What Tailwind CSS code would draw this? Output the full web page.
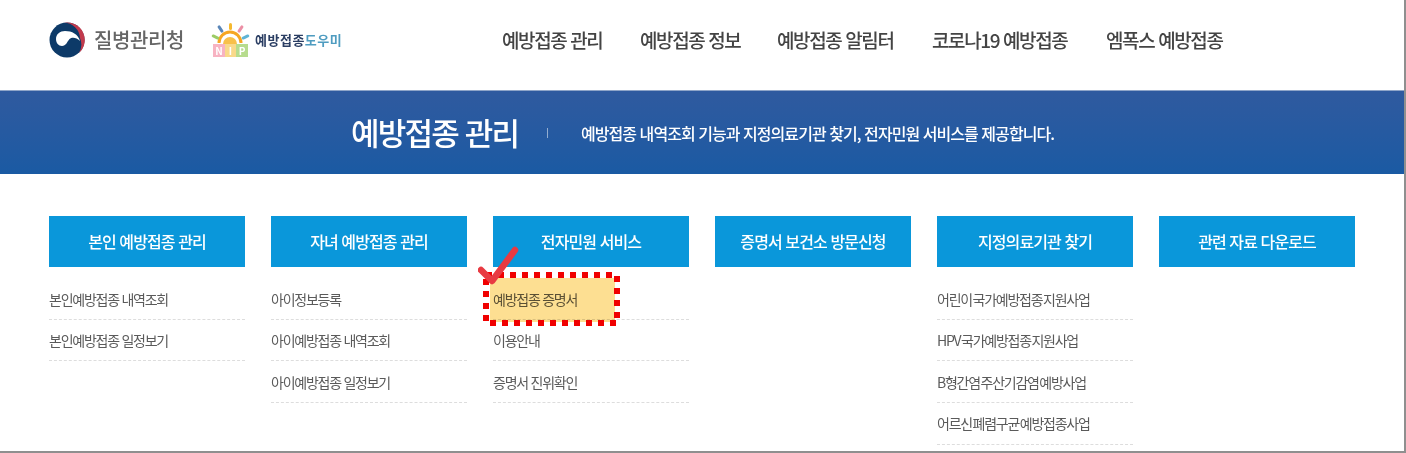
<!DOCTYPE html>
<html lang="ko">
<head>
  <meta charset="UTF-8" />
  <meta name="viewport" content="width=device-width, initial-scale=1.0"/>
  <title>예방접종 관리</title>
  <script src="https://cdn.jsdelivr.net/npm/@tailwindcss/browser@4"></script>
</head>
<body class="bg-white font-['Noto_Sans_CJK_KR','Noto_Sans',sans-serif]">
  <div class="relative w-[1406px] h-[453px] overflow-hidden bg-white border-r-2 border-b-2 border-[#8f8f8f]">

    <!-- Header -->
    <header class="h-[90px] flex items-center pl-[49px] pb-[10px] blur-[0.4px]">
      <div class="w-[135px] flex items-center gap-[9px]">
        <svg width="36" height="36" viewBox="0 0 36 36">
          <circle cx="18" cy="18" r="17.500" fill="#0d3a68"/>
          <path d="M15 0.800 A17.500 17.500 0 0 1 30 31 A17 17 0 0 0 31 16 A16 16 0 0 0 15 0.800Z" fill="#c23a4c"/>
          <path d="M7 17 C7 12 11 9 16 9 C23 9 29 12 31 19 C27 15 23 15 20.500 17 C18 20 17 24 13 24 C9.500 24 7 21 7 17Z" fill="#fff"/>
        </svg>
        <span class="text-[20px] font-medium tracking-[-0.4px] text-[#666] whitespace-nowrap">질병관리청</span>
      </div>
      <div class="ml-[27px] w-[133px] flex items-center gap-[4px]">
        <svg width="40" height="36" viewBox="0 0 40 36">
          <path d="M8 21 A11 11 0 0 1 30 21" fill="none" stroke="#f6a623" stroke-width="3"/>
          <path d="M12 22 A7 7 0 0 1 26 22 Z" fill="#f8c04a"/>
          <rect x="18" y="1" width="3" height="7" rx="1.500" fill="#f5b92f"/>
          <rect x="8" y="3" width="3" height="8" rx="1.500" fill="#5a86b8" transform="rotate(-35 9.500 7)"/>
          <rect x="28" y="3" width="3" height="8" rx="1.500" fill="#ec8fa5" transform="rotate(35 29.500 7)"/>
          <rect x="3" y="11" width="3" height="8" rx="1.500" fill="#9ccc65" transform="rotate(-65 4.500 15)"/>
          <rect x="33" y="11" width="3" height="8" rx="1.500" fill="#5fb4d6" transform="rotate(65 34.500 15)"/>
          <rect x="2" y="22" width="12" height="13" fill="#f7b3c2"/>
          <rect x="14" y="22" width="11" height="13" fill="#f9d98a"/>
          <rect x="25" y="22" width="12" height="13" fill="#b7dc8e"/>
          <text x="8" y="33" font-size="10" font-weight="700" fill="#fff" text-anchor="middle">N</text>
          <text x="19.500" y="33" font-size="10" font-weight="700" fill="#fff" text-anchor="middle">I</text>
          <text x="31" y="33" font-size="10" font-weight="700" fill="#fff" text-anchor="middle">P</text>
        </svg>
        <span class="text-[13px] font-bold tracking-[0.5px] text-[#2b3e63] whitespace-nowrap">예방접종<span class="text-[#4f9cc0]">도우미</span></span>
      </div>
      <nav class="ml-[158px] flex text-[19px] font-medium tracking-[-1.4px] text-[#444] whitespace-nowrap">
        <a class="w-[138px]">예방접종 관리</a>
        <a class="w-[137px]">예방접종 정보</a>
        <a class="w-[155px]">예방접종 알림터</a>
        <a class="w-[174px]">코로나19 예방접종</a>
        <a>엠폭스 예방접종</a>
      </nav>
    </header>

    <!-- Banner -->
    <section class="h-[84px] border-t border-[#8fa5c8] bg-gradient-to-b from-[#2f5a9f] to-[#1a5aa3] flex items-center pl-[351px] text-white whitespace-nowrap blur-[0.4px]">
      <h2 class="w-[196px] text-[31px] font-medium tracking-[-1.8px]">예방접종 관리</h2>
      <span class="w-px h-[10px] bg-white/50"></span>
      <p class="ml-[33px] text-[16px] font-medium tracking-[-0.95px]">예방접종 내역조회 기능과 지정의료기관 찾기, 전자민원 서비스를 제공합니다.</p>
    </section>

    <!-- Menu columns -->
    <main class="pt-[42px] pl-[49px] grid grid-cols-[repeat(6,196px)] gap-x-[26px] text-[14px] tracking-[-1.25px] text-[#5a5a5a] blur-[0.4px]">
      <div>
        <h3 class="h-[51px] pb-[2px] flex items-center justify-center bg-[#0a97da] text-white text-[16px] font-medium tracking-[-0.9px]">본인 예방접종 관리</h3>
        <ul class="pt-[11px]">
          <li class="h-[42px] pt-[11px] border-b border-dashed border-[#ddd]">본인예방접종 내역조회</li>
          <li class="h-[41px] pt-[10px] border-b border-dashed border-[#ddd]">본인예방접종 일정보기</li>
        </ul>
      </div>
      <div>
        <h3 class="h-[51px] pb-[2px] flex items-center justify-center bg-[#0a97da] text-white text-[16px] font-medium tracking-[-0.9px]">자녀 예방접종 관리</h3>
        <ul class="pt-[11px]">
          <li class="h-[42px] pt-[11px] border-b border-dashed border-[#ddd]">아이정보등록</li>
          <li class="h-[41px] pt-[10px] border-b border-dashed border-[#ddd]">아이예방접종 내역조회</li>
          <li class="h-[42px] pt-[11px] border-b border-dashed border-[#ddd]">아이예방접종 일정보기</li>
        </ul>
      </div>
      <div>
        <h3 class="h-[51px] pb-[2px] flex items-center justify-center bg-[#0a97da] text-white text-[16px] font-medium tracking-[-0.9px]">전자민원 서비스</h3>
        <ul class="pt-[11px]">
          <li class="h-[42px] pt-[11px] border-b border-dashed border-[#ddd]">예방접종 증명서</li>
          <li class="h-[41px] pt-[10px] border-b border-dashed border-[#ddd]">이용안내</li>
          <li class="h-[42px] pt-[11px] border-b border-dashed border-[#ddd]">증명서 진위확인</li>
        </ul>
      </div>
      <div>
        <h3 class="h-[51px] pb-[2px] flex items-center justify-center bg-[#0a97da] text-white text-[16px] font-medium tracking-[-0.9px]">증명서 보건소 방문신청</h3>
      </div>
      <div>
        <h3 class="h-[51px] pb-[2px] flex items-center justify-center bg-[#0a97da] text-white text-[16px] font-medium tracking-[-0.9px]">지정의료기관 찾기</h3>
        <ul class="pt-[11px] [word-spacing:-2px]">
          <li class="h-[42px] pt-[11px] border-b border-dashed border-[#ddd]">어린이 국가예방접종 지원사업</li>
          <li class="h-[41px] pt-[10px] border-b border-dashed border-[#ddd]">HPV 국가예방접종 지원사업</li>
          <li class="h-[42px] pt-[11px] border-b border-dashed border-[#ddd]">B형간염 주산기감염 예방사업</li>
          <li class="h-[42px] pt-[10px] border-b border-dashed border-[#ddd]">어르신 폐렴구균 예방접종사업</li>
        </ul>
      </div>
      <div>
        <h3 class="h-[51px] pb-[2px] flex items-center justify-center bg-[#0a97da] text-white text-[16px] font-medium tracking-[-0.9px]">관련 자료 다운로드</h3>
      </div>
    </main>

    <!-- Highlight over 예방접종 증명서 -->
    <div class="absolute left-[490px] top-[278px] w-[125px] h-[44px] bg-[#fddf92] mix-blend-multiply"></div>
    <svg class="absolute left-[478px] top-[244px]" width="145" height="84" viewBox="0 0 145 84">
      <rect x="8" y="31" width="131" height="48" fill="none" stroke="#f00000" stroke-width="6" stroke-dasharray="6 6"/>
      <path d="M3 26 L14 37 L37 6" fill="none" stroke="#e83a42" stroke-width="6.500" stroke-linecap="round" stroke-linejoin="round"/>
    </svg>
  </div>
</body>
</html>
